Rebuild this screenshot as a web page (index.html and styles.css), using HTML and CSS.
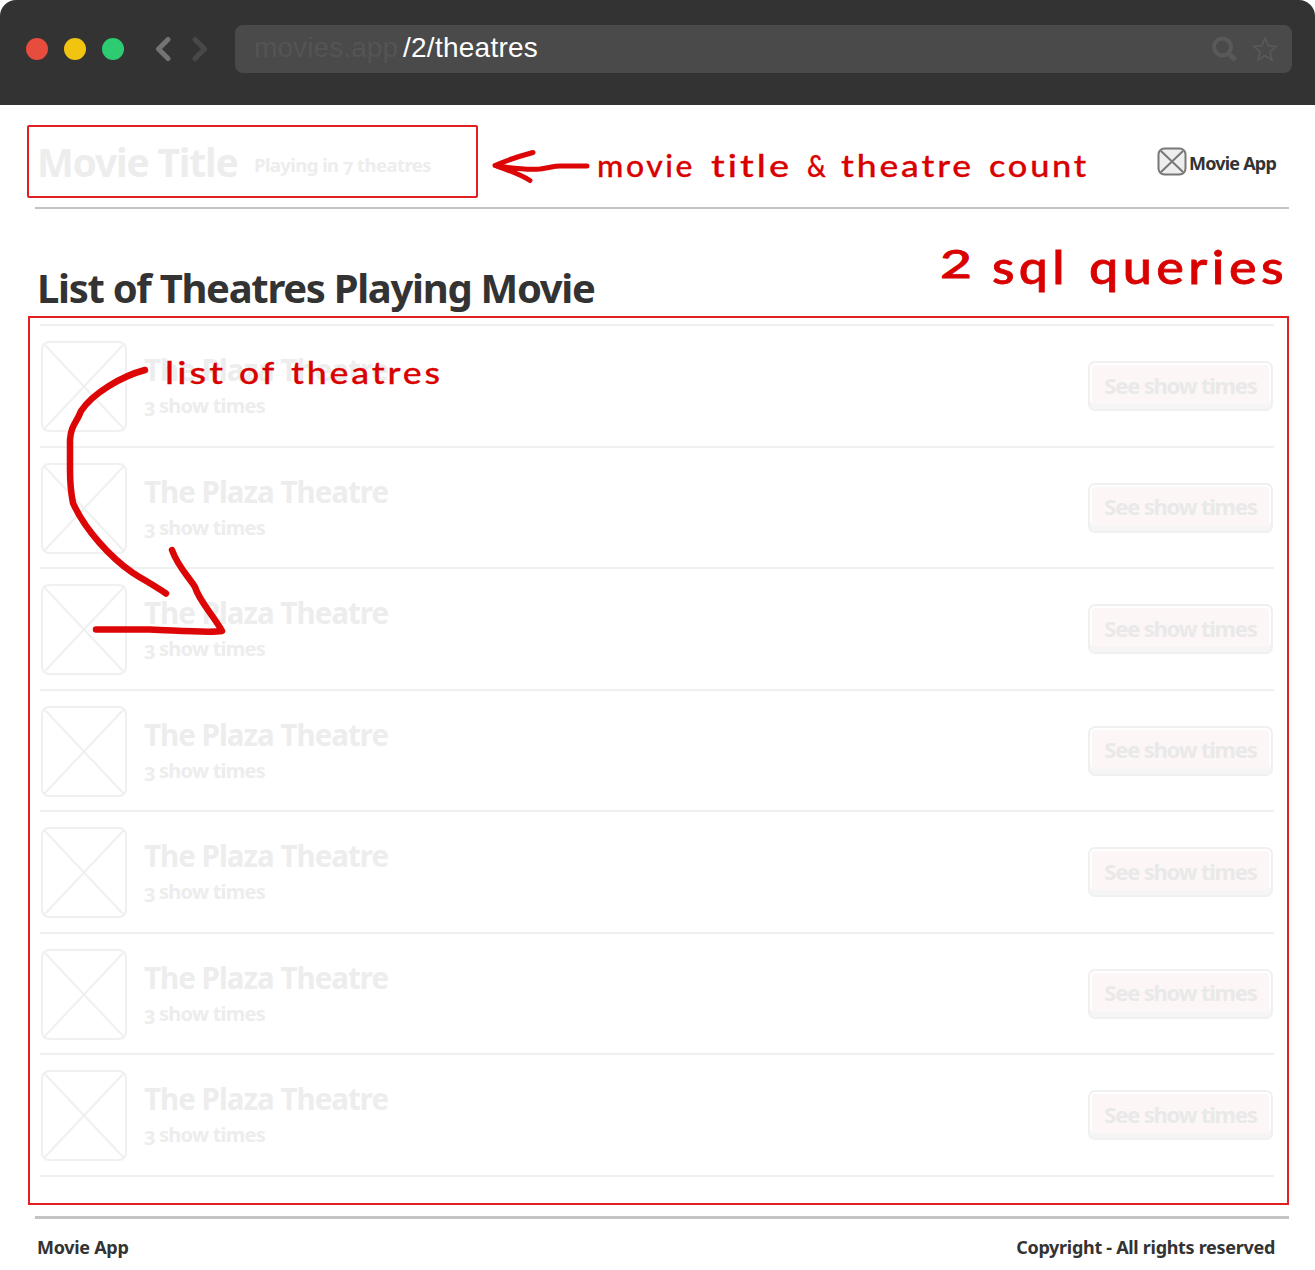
FILE: index.html
```html
<!DOCTYPE html>
<html lang="en">
<head>
<meta charset="utf-8">
<title>Movie App</title>
<link rel="stylesheet" href="styles.css">
</head>
<body>
<header class="chrome">
  <div class="lights"><i class="red"></i><i class="yellow"></i><i class="green"></i></div>
  <svg class="nav" width="56" height="26" viewBox="0 0 56 26" fill="none" stroke-width="5" stroke-linecap="round" stroke-linejoin="round"><path stroke="#737373" d="M14 3.500L4.500 13l9.500 9.500"/><path stroke="#484848" d="M41 3.500L50.500 13l-9.500 9.500"/></svg>
  <div class="address">
    <span class="host">movies.app</span><span class="path">/2/theatres</span>
    <svg class="tools" width="68" height="28" viewBox="0 0 68 28" fill="none" stroke="#595959"><circle cx="11.500" cy="12" r="8.500" stroke-width="4"/><path stroke-width="5" d="M17 18l7.500 7"/><path stroke-width="1.600" d="M54 3l3.200 7.800 8 .6-6.200 5.200 2 8.400-7-4.500-7 4.500 2-8.400-6.200-5.200 8-.6z"/></svg>
  </div>
</header>
<div class="page">
  <div class="top">
    <div class="titlebox"><h1>Movie Title</h1><p>Playing in <span class="old">7</span> theatres</p></div>
    <div class="brand"><svg width="30" height="29" viewBox="0 0 30 29" fill="#eee" stroke="#777" stroke-width="2"><rect x="1.500" y="1.500" width="27" height="26" rx="6"/><path d="M4 4l22 21M26 4L4 25"/></svg><span>Movie App</span></div>
  </div>
  <h2>List of Theatres Playing Movie</h2>
  <main class="listbox">
    <ul>
      <li><svg class="thumb" viewBox="0 0 86 91"><rect x="1" y="1" width="84" height="89" rx="7"/><path d="M3 3l80 85M83 3L3 88"/></svg><div class="info"><h3>The Plaza Theatre</h3><p><span class="old">3</span> show times</p></div><button>See show times</button></li>
      <li><svg class="thumb" viewBox="0 0 86 91"><rect x="1" y="1" width="84" height="89" rx="7"/><path d="M3 3l80 85M83 3L3 88"/></svg><div class="info"><h3>The Plaza Theatre</h3><p><span class="old">3</span> show times</p></div><button>See show times</button></li>
      <li><svg class="thumb" viewBox="0 0 86 91"><rect x="1" y="1" width="84" height="89" rx="7"/><path d="M3 3l80 85M83 3L3 88"/></svg><div class="info"><h3>The Plaza Theatre</h3><p><span class="old">3</span> show times</p></div><button>See show times</button></li>
      <li><svg class="thumb" viewBox="0 0 86 91"><rect x="1" y="1" width="84" height="89" rx="7"/><path d="M3 3l80 85M83 3L3 88"/></svg><div class="info"><h3>The Plaza Theatre</h3><p><span class="old">3</span> show times</p></div><button>See show times</button></li>
      <li><svg class="thumb" viewBox="0 0 86 91"><rect x="1" y="1" width="84" height="89" rx="7"/><path d="M3 3l80 85M83 3L3 88"/></svg><div class="info"><h3>The Plaza Theatre</h3><p><span class="old">3</span> show times</p></div><button>See show times</button></li>
      <li><svg class="thumb" viewBox="0 0 86 91"><rect x="1" y="1" width="84" height="89" rx="7"/><path d="M3 3l80 85M83 3L3 88"/></svg><div class="info"><h3>The Plaza Theatre</h3><p><span class="old">3</span> show times</p></div><button>See show times</button></li>
      <li><svg class="thumb" viewBox="0 0 86 91"><rect x="1" y="1" width="84" height="89" rx="7"/><path d="M3 3l80 85M83 3L3 88"/></svg><div class="info"><h3>The Plaza Theatre</h3><p><span class="old">3</span> show times</p></div><button>See show times</button></li>
    </ul>
  </main>
  <footer><span class="f-left">Movie App</span><span class="f-right">Copyright - All rights reserved</span></footer>
</div>
<!-- Hand-drawn notes laid over the page -->
<svg class="notes" width="1315" height="1270" viewBox="0 0 1315 1270">
  <g class="ink">
    <path stroke-width="5" d="M533 152.500C520 156 507 160 495 165.500C508 170 520 174 530 180.500M495 165.500C510 168 525 170 540 169C550 168 554 165.500 562 166H587"/>
    <path stroke-width="6.500" d="M145 370C122 376 93 393 81 411C76 424 71 425 70 440V470C70 480 71 493 73 503C85 530 111 558 133 573C144 580 155 586 166 593.500M172 550C178 567 189 577 195 587C199 601 214 616 222 631C210 633 185 631 150 629.500H96"/>
  </g>
  <g class="hand">
    <text x="597" y="177" textLength="98" lengthAdjust="spacingAndGlyphs">movie</text><text x="711" y="177" textLength="81" lengthAdjust="spacingAndGlyphs">title</text><text x="807" y="177" textLength="21" lengthAdjust="spacingAndGlyphs">&amp;</text><text x="841" y="177" textLength="133" lengthAdjust="spacingAndGlyphs">theatre</text><text x="989" y="177" textLength="100" lengthAdjust="spacingAndGlyphs">count</text>
    <text x="165" y="384" textLength="61" lengthAdjust="spacingAndGlyphs">list</text><text x="239" y="384" textLength="38" lengthAdjust="spacingAndGlyphs">of</text><text x="291" y="384" textLength="152" lengthAdjust="spacingAndGlyphs">theatres</text>
    <g class="big"><text class="two" x="940" y="278" textLength="32" lengthAdjust="spacingAndGlyphs">2</text><text x="992" y="284" textLength="77" lengthAdjust="spacingAndGlyphs">sql</text><text x="1089" y="284" textLength="199" lengthAdjust="spacingAndGlyphs">queries</text></g>
  </g>
</svg>
</body>
</html>
```
FILE: styles.css
```css
* { box-sizing: border-box; margin: 0; padding: 0; }
body { width: 1315px; height: 1270px; background: #fff; font-family: "Noto Sans", sans-serif; font-weight: 700; color: #333; overflow: hidden; white-space: nowrap; }
.chrome { height: 105px; background: #333; border-radius: 16px 16px 0 0; display: flex; align-items: flex-start; padding: 25px 23px 0 26px; }
.lights { display: flex; gap: 16px; padding-top: 13px; }
.lights i { width: 22px; height: 22px; border-radius: 50%; }
.red { background: #e74c3c; }
.yellow { background: #f1c40f; }
.green { background: #2ecc71; }
.nav { margin: 11px 25px 0 30px; }
.address { flex: 1; height: 48px; background: #4a4a4a; border-radius: 8px; display: flex; align-items: center; padding: 0 13px 3px 19px; font: 400 28px "Liberation Sans", sans-serif; }
.host { color: #545454; width: 149px; letter-spacing: .1px; }
.path { color: #fff; letter-spacing: .25px; }
.tools { margin: 3px 0 0 auto; }
.page { padding: 20px 26px 0 27px; }
.top { height: 84px; display: flex; justify-content: space-between; background: linear-gradient(#c4c4c4, #c4c4c4) 8px 100% / 1254px 2.5px no-repeat; }
.titlebox { width: 451px; height: 73px; border: 2px solid #e02020; border-radius: 2px; display: flex; padding-left: 8px; color: #ededed; }
.titlebox h1 { font-size: 39px; line-height: 70px; width: 217px; letter-spacing: -1.2px; }
.titlebox p { font-size: 18.5px; line-height: 75px; letter-spacing: -.57px; }
.brand { display: flex; align-items: flex-start; gap: 2px; padding: 22px 13px 0 0; font-size: 18px; line-height: 32px; letter-spacing: -.8px; }
.old { display: inline-block; transform: translateY(3px) scaleY(.95); }
h2 { padding-left: 10px; font-size: 40px; line-height: 54px; height: 107px; padding-top: 52px; letter-spacing: -1.3px; }
.listbox { margin: 0 0 0 1px; width: 1261px; height: 889px; border: 2px solid #e02020; padding: 6px 13px 0 10px; color: #ededed; }
ul { list-style: none; border-top: 2px solid #f0f0f0; }
li { height: 121.5px; border-bottom: 2px solid #f0f0f0; display: flex; padding: 15px 1px 0 1px; }
.thumb { width: 86px; height: 91px; fill: #fff; stroke: #f0f0f0; stroke-width: 2; }
.info { flex: 1; padding-left: 17px; }
h3 { font-size: 29.5px; line-height: 40px; padding-top: 9px; letter-spacing: -.97px; }
.info p { font-size: 20px; line-height: 31px; letter-spacing: -.77px; }
button { width: 185px; height: 50px; margin-top: 20px; border: 2px solid #f0f0f0; border-radius: 7px; background: #fdf6f6; box-shadow: inset 0 -5px #f5f5f5, inset 0 0 0 2px #fff; font: 700 22px "Noto Sans", sans-serif; letter-spacing: -1.2px; color: #e9e9e9; padding-bottom: 3px; }
footer { margin: 11px 0 0 8px; border-top: 3px solid #c4c4c4; height: 54px; width: 1254px; display: flex; justify-content: space-between; padding: 14px 14px 0 2px; font-size: 18px; line-height: 28px; letter-spacing: -.3px; }
.notes { position: absolute; left: 0; top: 0; pointer-events: none; }
.ink { fill: none; stroke: #dd0606; stroke-linecap: round; stroke-linejoin: round; }
.hand { fill: #d90000; stroke: #d90000; stroke-width: .3; font: 500 31px Lato, "Noto Sans", sans-serif; letter-spacing: 2.5px; font-variant-ligatures: none; }
.big { font-size: 47px; stroke-width: .8; letter-spacing: 4px; }
.two { font-size: 39px; letter-spacing: 0; }
```
